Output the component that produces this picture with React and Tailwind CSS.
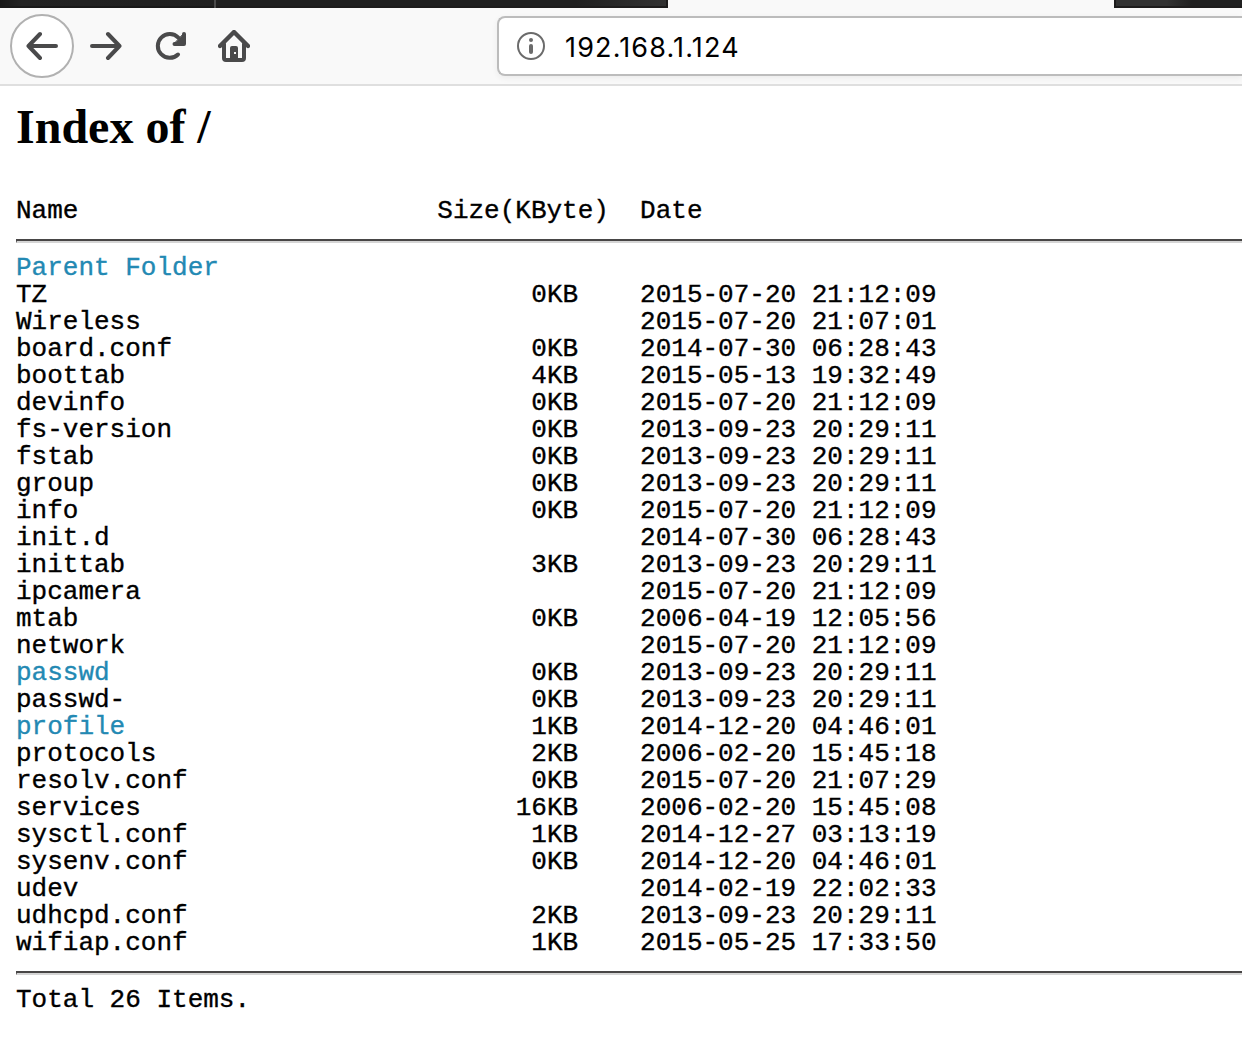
const files = [
  ['Parent Folder', '', '', true],
  ['TZ', '0KB', '2015-07-20 21:12:09'],
  ['Wireless', '', '2015-07-20 21:07:01'],
  ['board.conf', '0KB', '2014-07-30 06:28:43'],
  ['boottab', '4KB', '2015-05-13 19:32:49'],
  ['devinfo', '0KB', '2015-07-20 21:12:09'],
  ['fs-version', '0KB', '2013-09-23 20:29:11'],
  ['fstab', '0KB', '2013-09-23 20:29:11'],
  ['group', '0KB', '2013-09-23 20:29:11'],
  ['info', '0KB', '2015-07-20 21:12:09'],
  ['init.d', '', '2014-07-30 06:28:43'],
  ['inittab', '3KB', '2013-09-23 20:29:11'],
  ['ipcamera', '', '2015-07-20 21:12:09'],
  ['mtab', '0KB', '2006-04-19 12:05:56'],
  ['network', '', '2015-07-20 21:12:09'],
  ['passwd', '0KB', '2013-09-23 20:29:11', true],
  ['passwd-', '0KB', '2013-09-23 20:29:11'],
  ['profile', '1KB', '2014-12-20 04:46:01', true],
  ['protocols', '2KB', '2006-02-20 15:45:18'],
  ['resolv.conf', '0KB', '2015-07-20 21:07:29'],
  ['services', '16KB', '2006-02-20 15:45:08'],
  ['sysctl.conf', '1KB', '2014-12-27 03:13:19'],
  ['sysenv.conf', '0KB', '2014-12-20 04:46:01'],
  ['udev', '', '2014-02-19 22:02:33'],
  ['udhcpd.conf', '2KB', '2013-09-23 20:29:11'],
  ['wifiap.conf', '1KB', '2015-05-25 17:33:50'],
];

function Icon({ children }) {
  return (
    <svg viewBox="0 0 32 32" className="block h-8 w-8 shrink-0" fill="none" stroke="#4a4a4b" strokeWidth="4" strokeLinecap="round" strokeLinejoin="round">
      {children}
    </svg>
  );
}

function TabStrip() {
  return (
    <div className="flex h-2">
      <div className="w-[214px] border-b-2 border-[#191919] bg-linear-to-r from-[#181818] via-[#232323] via-10% to-[#202020]" />
      <div className="w-0.5 bg-[#4b4b4b]" />
      <div className="w-[452px] border-r-2 border-b-2 border-[#1d1c1c] bg-linear-to-r from-[#202020] from-80% to-[#323232]" />
      <div className="w-[446px]" />
      <div className="flex-1 border-b-2 border-l-2 border-[#1d1c1c] bg-linear-to-r from-[#323232] from-40% to-[#202020] to-60%" />
    </div>
  );
}

function Toolbar() {
  return (
    <div className="flex h-[76px] items-center pl-2.5">
      <div className="flex h-16 w-16 shrink-0 items-center justify-center rounded-full border-2 border-[#b1b1b1] bg-white">
        <Icon><path d="M30 16H2.5M14 4L2.5 16L14 28" /></Icon>
      </div>
      <div className="ml-4"><Icon><path d="M2 16H29.5M18 4L29.5 16L18 28" /></Icon></div>
      <div className="ml-8">
        <Icon>
          <path d="M24 24.5A11.9 11.9 0 1 1 24.3 7.7" />
          <path d="M30 4V14H20.5" />
          <path d="M29 4.5V13.5H20.5Z" fill="#4a4a4b" strokeWidth="1" />
        </Icon>
      </div>
      <div className="ml-8">
        <Icon>
          <path d="M2 16L16 2L30 16" strokeWidth="4.4" />
          <path d="M6 14V28Q6 30 8 30H24Q26 30 26 28V14" />
          <path d="M12 30V18Q12 16 14 16H18Q20 16 20 18V30ZM16 22V24H18V22Z" fill="#4a4a4b" fillRule="evenodd" stroke="none" />
        </Icon>
      </div>
      <div className="ml-[247px] flex h-[60px] flex-1 items-center rounded-l-lg border-2 border-r-0 border-[#bcbcbc] bg-white pl-[18px] shadow-[0_2px_6px_rgba(0,0,0,0.06)]">
        <svg viewBox="0 0 28 28" className="h-7 w-7 shrink-0" fill="none">
          <circle cx="14" cy="14" r="13" stroke="#6b6b6b" strokeWidth="2" />
          <circle cx="14" cy="8" r="2" fill="#6b6b6b" />
          <path d="M14 14V20" stroke="#6b6b6b" strokeWidth="4" strokeLinecap="round" />
        </svg>
        <span className="ml-5 pt-[3px] font-['Inter',sans-serif] text-[27px] leading-8 tracking-[1.15px] text-black">192.168.1.124</span>
      </div>
    </div>
  );
}

function Rule() {
  return <div className="h-1 border-t-2 border-b-2 border-l border-t-[#484646] border-b-[#d5d5d5] border-l-[#484646]" />;
}

const row = 'grid h-[27px] grid-cols-[421.3px_202.8px_auto] whitespace-pre';

export default function App() {
  return (
    <div className="h-[1048px] w-[1242px] overflow-hidden bg-white text-black">
      <header className="h-[86px] border-b-2 border-[#dfdfdf] bg-[#f9f9f9]">
        <TabStrip />
        <Toolbar />
      </header>
      <main className="pl-4 font-['Liberation_Mono',monospace] text-[26px] leading-[27px]">
        <h1 className="pt-[13px] pb-px font-['Liberation_Serif',serif] text-[48px] leading-[56px] font-bold">Index of /</h1>
        <div className="[-webkit-text-stroke:0.35px]">
          <div className="mt-[42px]">
            <div className={row}>
              <span>Name</span><span>Size(KByte)</span><span>Date</span>
            </div>
          </div>
          <div className="mt-[14px]"><Rule /></div>
          <div className="mt-3">
            {files.map(([name, size, date, link]) => (
              <div key={name} className={row}>
                {link ? <a className="text-[#2389b3]">{name}</a> : <span>{name}</span>}
                <span className="pr-[62px] text-right">{size}</span>
                <span>{date}</span>
              </div>
            ))}
          </div>
          <div className="mt-[14px]"><Rule /></div>
          <p className="mt-3">Total 26 Items.</p>
        </div>
      </main>
    </div>
  );
}
